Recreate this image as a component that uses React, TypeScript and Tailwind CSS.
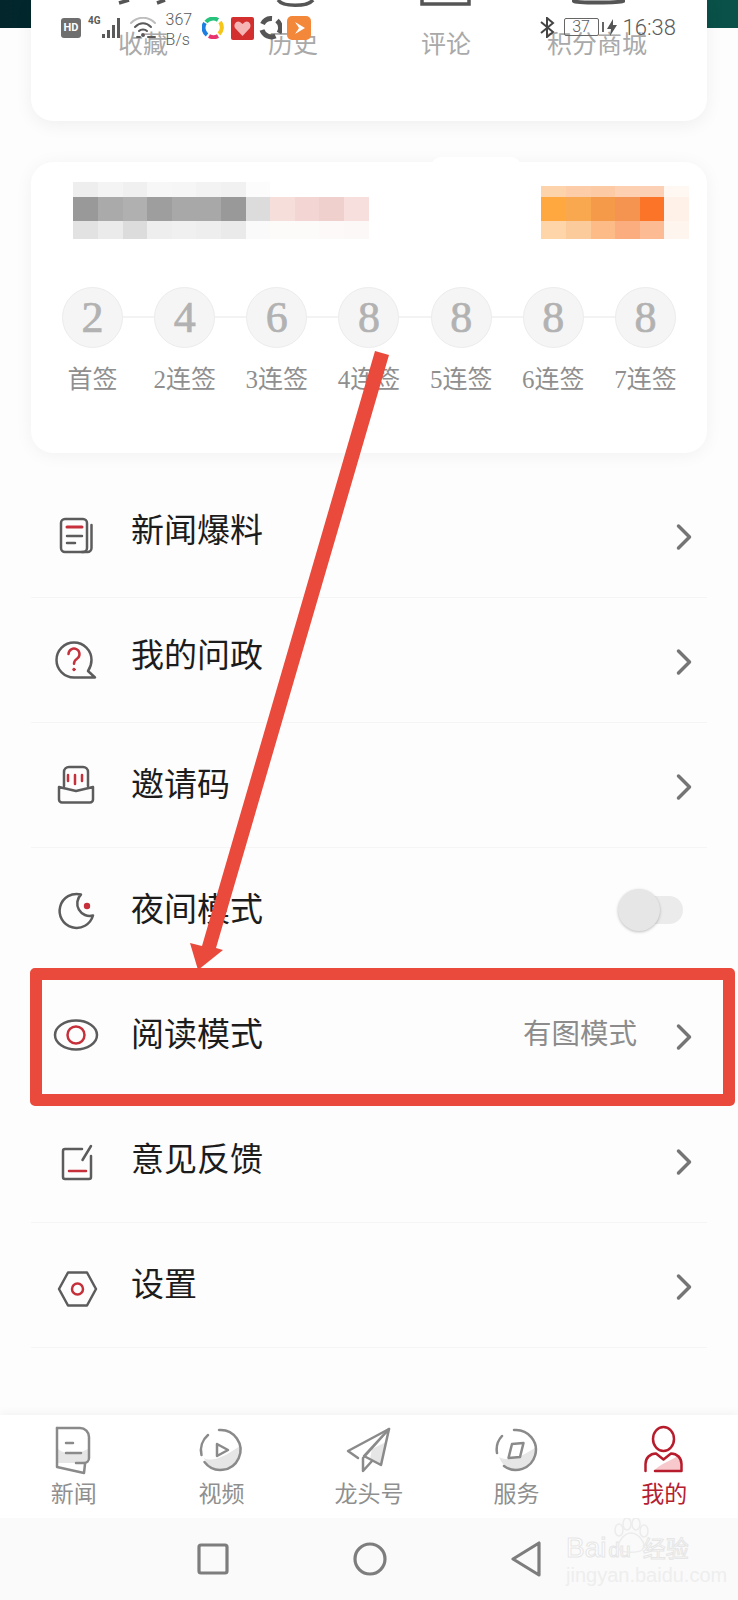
import React from 'react';
import { ChevronRight } from 'lucide-react';

const GRAY = '#5c5c5c';
const RED = '#c5303a';

const topLinks = ['收藏', '历史', '评论', '积分商城'];
const steps = [
  { n: '2', label: '首签' },
  { n: '4', label: '2连签' },
  { n: '6', label: '3连签' },
  { n: '8', label: '4连签' },
  { n: '8', label: '5连签' },
  { n: '8', label: '6连签' },
  { n: '8', label: '7连签' },
];

const leftMosaic = [
  { h: 'h-[15px]', cells: ['#eeeeee', '#f4f4f4', '#f0f0f0', '#f7f7f7', '#f6f6f6', '#f3f3f3', '#f1f1f1', '#fcfcfc', '#ffffff', '#ffffff', '#ffffff', '#ffffff'] },
  { h: 'h-[24px]', cells: ['#999999', '#aaaaaa', '#b0b0b0', '#9e9e9e', '#a8a8a8', '#a8a8a8', '#999999', '#dcdcdc', '#f6dedb', '#f3d6d3', '#efd0cc', '#f6dfdc'] },
  { h: 'h-[18px]', cells: ['#e2e2e2', '#ebebeb', '#dcdcdc', '#eeeeee', '#f0f0f0', '#eeeeee', '#eaeaea', '#fafafa', '#fdfafa', '#fdfafa', '#fdf9f9', '#fdf8f8'] },
];
const rightMosaic = [
  { h: 'h-[11px]', cells: ['#fdd3ac', '#fccda8', '#fccba6', '#fcd0b0', '#fcd0b4', '#fff7f2'] },
  { h: 'h-[24px]', cells: ['#ffa840', '#f9a850', '#f59a48', '#f59350', '#fc7428', '#fff0e8'] },
  { h: 'h-[18px]', cells: ['#fdd5a8', '#fccb9c', '#fdbb88', '#fbad80', '#fdbb94', '#fff5ef'] },
];

const NewsIcon = () => (
  <svg width="50" height="50" viewBox="0 0 50 50" fill="none" strokeWidth="2.5" strokeLinecap="round" strokeLinejoin="round">
    <rect x="10" y="9" width="26" height="33" rx="4" stroke={GRAY} />
    <path d="M40.5 15V38a4 4 0 0 1-4 4H31" stroke={GRAY} />
    <path d="M16 17H31" stroke={RED} strokeWidth="3" />
    <path d="M16 26H31M16 33H24" stroke={GRAY} />
  </svg>
);
const QuestionIcon = () => (
  <svg width="50" height="50" viewBox="0 0 50 50" fill="none" strokeWidth="2.5" strokeLinecap="round" strokeLinejoin="round">
    <path d="M44 42.500H23A17.500 17.500 0 1 1 40.500 25C40.500 29 39 33 37 36Z" stroke={GRAY} />
    <path d="M17.500 19a5.500 5.500 0 1 1 8.500 4.700c-2 1.300-3 2.500-3 5" stroke={RED} />
    <circle cx="23" cy="34.500" r="1.300" fill={RED} stroke={RED} strokeWidth="1" />
  </svg>
);
const InviteIcon = () => (
  <svg width="50" height="50" viewBox="0 0 50 50" fill="none" strokeWidth="2.5" strokeLinecap="round" strokeLinejoin="round">
    <path d="M13 26V12a5 5 0 0 1 5-5H32a5 5 0 0 1 5 5V26" stroke={GRAY} />
    <path d="M8 27L25 31L42 27V39.500a3 3 0 0 1-3 3H11a3 3 0 0 1-3-3Z" stroke={GRAY} />
    <path d="M17 15V21M24 15V24M31 15V21" stroke={RED} />
  </svg>
);
const MoonIcon = () => (
  <svg width="50" height="50" viewBox="0 0 50 50" fill="none" strokeWidth="2.5" strokeLinecap="round" strokeLinejoin="round">
    <path d="M30 9.500A17 17 0 1 0 42 30.500A12.500 12.500 0 0 1 30 9.500Z" stroke={GRAY} />
    <circle cx="36" cy="21" r="3.200" fill={RED} />
  </svg>
);
const EyeIcon = () => (
  <svg width="50" height="50" viewBox="0 0 50 50" fill="none" strokeWidth="2.500">
    <ellipse cx="25" cy="25" rx="21" ry="14.500" stroke={GRAY} />
    <circle cx="25" cy="25" r="8.500" stroke={RED} />
  </svg>
);
const FeedbackIcon = () => (
  <svg width="50" height="50" viewBox="0 0 50 50" fill="none" strokeWidth="2.500" strokeLinecap="round" strokeLinejoin="round">
    <path d="M31 14H14a2 2 0 0 0-2 2V42a2 2 0 0 0 2 2H38a2 2 0 0 0 2-2V21" stroke={GRAY} />
    <path d="M40 11L31.500 25" stroke={GRAY} />
    <path d="M18 36H35" stroke={RED} />
  </svg>
);
const SettingsIcon = () => (
  <svg width="50" height="50" viewBox="0 0 50 50" fill="none" strokeWidth="2.500" strokeLinejoin="round">
    <path d="M8 29L17 12.500H36L45 29L36 45.500H17Z" stroke={GRAY} />
    <circle cx="26.500" cy="29" r="5.500" stroke={RED} />
  </svg>
);

const menu = [
  { title: '新闻爆料', icon: <NewsIcon />, up: true },
  { title: '我的问政', icon: <QuestionIcon />, up: true },
  { title: '邀请码', icon: <InviteIcon /> },
  { title: '夜间模式', icon: <MoonIcon />, toggle: true },
  { title: '阅读模式', icon: <EyeIcon />, value: '有图模式' },
  { title: '意见反馈', icon: <FeedbackIcon /> },
  { title: '设置', icon: <SettingsIcon /> },
];

const TabNews = () => (
  <svg width="60" height="50" viewBox="0 0 60 50" fill="none" stroke="#8a8a8a" strokeWidth="2.500" strokeLinejoin="round" strokeLinecap="round">
    <path d="M14 24C24 32 36 28 44 24V33a5 5 0 0 1-5 5H14Z" fill="#e6e6e6" stroke="none" />
    <path d="M13 3H36a9 9 0 0 1 9 9V33a5 5 0 0 1-5 5H32" />
    <path d="M13 3V42L40 48L41 39" />
    <path d="M22 18H29M22 28H37" />
  </svg>
);
const TabVideo = () => (
  <svg width="60" height="50" viewBox="0 0 60 50" fill="none" stroke="#8a8a8a" strokeWidth="2.500" strokeLinejoin="round" strokeLinecap="round">
    <path d="M13 33C22 38 36 30 49 21C50 34 41 45 29.500 45C22 45 16 40 13 33Z" fill="#e6e6e6" stroke="none" />
    <path d="M28 5A20 20 0 1 1 13.500 37M10.500 30A20 20 0 0 1 17 10" />
    <path d="M26 19L37 25L26 31Z" />
  </svg>
);
const TabPlane = () => (
  <svg width="60" height="50" viewBox="0 0 60 50" fill="none" stroke="#8a8a8a" strokeWidth="2.500" strokeLinejoin="round" strokeLinecap="round">
    <path d="M33 24L47 17L43 40L31 34Z" fill="#e6e6e6" stroke="none" />
    <path d="M50 4L9 26L19 33" />
    <path d="M50 4L42 40L25 31L50 4L24 33V46L33 36" />
  </svg>
);
const TabCompass = () => (
  <svg width="60" height="50" viewBox="0 0 60 50" fill="none" stroke="#8a8a8a" strokeWidth="2.500" strokeLinejoin="round" strokeLinecap="round">
    <path d="M12 32C22 38 38 30 49 22C50 35 41 45 29.500 45C21 45 15 40 12 32Z" fill="#e6e6e6" stroke="none" />
    <path d="M27 5A20 20 0 1 1 17 41M10 28A20 20 0 0 1 15 11" />
    <path d="M25 19L36.500 18L33 32L21.500 33Z" />
  </svg>
);
const TabMe = () => (
  <svg width="60" height="50" viewBox="0 0 60 50" fill="none" stroke="#b71c2c" strokeWidth="2.500" strokeLinejoin="round" strokeLinecap="round">
    <path d="M20 46C24 40 40 34 46 30C47 35 47 41 47 46Z" fill="#f7c9cd" stroke="none" />
    <ellipse cx="29.500" cy="14" rx="10.500" ry="12" />
    <path d="M11.500 46V39C11.500 33 16 28.500 22 28.500L29.500 34.500L37 28.500C43 28.500 47.500 33 47.500 39V46H21" />
  </svg>
);

const tabs = [
  { label: '新闻', icon: <TabNews /> },
  { label: '视频', icon: <TabVideo /> },
  { label: '龙头号', icon: <TabPlane /> },
  { label: '服务', icon: <TabCompass /> },
  { label: '我的', icon: <TabMe />, active: true },
];

const StatusBar = () => (
  <div className="absolute top-0 left-0 w-full h-[50px] flex items-start pl-[61px] pr-[62px] text-[#5a5a5a] font-['Roboto','Noto_Sans_CJK_SC',sans-serif]">
    <div className="mt-[18px] w-[20px] h-[20px] rounded-[3px] bg-[#6e6e6e] text-white text-[11px] font-bold leading-[20px] text-center">HD</div>
    <span className="ml-[7px] mt-[14px] text-[10px] font-bold leading-[14px]">4G</span>
    <svg className="mt-[17px]" width="22" height="22" viewBox="0 0 22 22" fill="#5a5a5a">
      <rect x="1" y="17" width="3" height="4" />
      <rect x="6" y="13" width="3" height="8" />
      <rect x="11" y="8" width="3" height="13" />
      <rect x="16" y="1" width="3" height="20" />
    </svg>
    <svg className="mt-[17px] ml-[7px]" width="26" height="22" viewBox="0 0 26 22" fill="none" stroke="#5a5a5a" strokeWidth="2" strokeLinecap="round">
      <path d="M1 6C8 -1 18 -1 25 6" stroke="#bdbdbd" />
      <path d="M5 10C10 5 16 5 21 10M9 14C11 12 15 12 17 14" />
      <circle cx="13" cy="18" r="1" fill="#5a5a5a" />
      <path d="M18 20H25M7 20H10" />
    </svg>
    <div className="ml-[10px] mt-[11px] text-[16px] leading-[18px] font-light w-[36px]">
      <div>367</div>
      <div className="mt-[2px]">B/s</div>
    </div>
    <svg className="mt-[17px]" width="22" height="22" viewBox="0 0 22 22" fill="none" strokeWidth="4">
      <path d="M4 5A9 9 0 0 1 16 3" stroke="#27c27c" />
      <path d="M18 5A9 9 0 0 1 17 17" stroke="#f5c518" />
      <path d="M16 19A9 9 0 0 1 7 19" stroke="#e8336d" />
      <path d="M5 18A9 9 0 0 1 3 6" stroke="#1f7fe0" />
    </svg>
    <svg className="ml-[7px] mt-[17px]" width="23" height="23" viewBox="0 0 23 23">
      <rect width="23" height="23" rx="2" fill="#d32f2f" />
      <path d="M11.500 19L4 11C2 7 6 3 9 5L11.500 7L14 5C17 3 21 7 19 11Z" fill="#f5b5b5" />
    </svg>
    <svg className="ml-[5px] mt-[16px]" width="23" height="24" viewBox="0 0 23 24" fill="none" stroke="#555555" strokeWidth="5">
      <path d="M3.500 8A10 10 0 0 1 13 2.500M18 4.500A10 10 0 0 1 20 17M16.500 20A10 10 0 0 1 3 14" />
    </svg>
    <svg className="ml-[5px] mt-[16px]" width="24" height="24" viewBox="0 0 24 24">
      <rect width="24" height="24" rx="5" fill="#f3873a" />
      <path d="M8 6L18 12L8 18L12 12Z" fill="#ffffff" />
    </svg>
    <svg className="ml-auto mt-[17px]" width="15" height="21" viewBox="0 0 15 21" fill="none" stroke="#444444" strokeWidth="2">
      <path d="M1 5L13 15L7 20V1L13 6L1 16" />
    </svg>
    <div className="ml-[9px] mt-[18px] w-[35px] h-[18px] border border-[#666666] rounded-[2px] text-[16px] leading-[16px] text-center font-light">37</div>
    <div className="ml-[3px] mt-[22px] w-[2px] h-[10px] bg-[#666666]" />
    <svg className="ml-[3px] mt-[19px]" width="10" height="17" viewBox="0 0 10 17" fill="#555555">
      <path d="M6 0L0 10H4L3 17L10 6H6Z" />
    </svg>
    <span className="ml-[6px] mt-[15px] text-[22px] leading-[26px] font-light">16:38</span>
  </div>
);

const App = () => {
  return (
    <div className="relative w-[738px] h-[1600px] overflow-hidden flex flex-col bg-[#fdfdfd] font-['Liberation_Serif','Noto_Sans_CJK_SC',serif]">
      {/* teal header behind the first card */}
      <div className="absolute top-0 left-0 w-full h-[28px] bg-gradient-to-r from-[#02262b] via-[#033a3c] to-[#0a5249]" />

      {/* Shortcuts card */}
      <section className="relative mx-[31px] h-[121px] shrink-0 rounded-b-[22px] bg-white shadow-[0_4px_18px_rgba(0,0,0,0.06)]">
        <svg className="absolute top-0 left-0" width="676" height="8" viewBox="0 0 676 8" fill="none" stroke="#555555" strokeWidth="3.500">
          <path d="M88 3L98 0M134 0L126 3" />
          <path d="M247 0C252 7 276 7 282 0" />
          <path d="M391 0V4H438V0" />
          <path d="M543 0V1C545 3 588 3 592 1V0" strokeWidth="4" />
        </svg>
        <div className="flex pt-[30px] text-[25px] leading-[30px] text-[#a9a9a9]">
          {topLinks.map((t, i) => (
            <span key={t} className={['ml-[87px]', 'ml-[100px]', 'ml-[103px]', 'ml-[76px]'][i]}>{t}</span>
          ))}
        </div>
      </section>

      {/* Sign-in card */}
      <section className="relative mx-[31px] mt-[41px] h-[291px] shrink-0 rounded-[22px] bg-white shadow-[0_2px_18px_rgba(0,0,0,0.05)] pt-[20px]">
        <div className="absolute -top-[5px] left-[400px] w-[90px] h-[20px] rounded-full bg-white" />
        <div className="relative flex justify-between pl-[42.400px] pr-[18px] h-[57px]">
          <div className="flex flex-col">
            {leftMosaic.map((row, i) => (
              <div key={i} className={`flex ${row.h}`}>
                {row.cells.map((c, j) => (
                  <div key={j} className="w-[24.600px]" style={{ background: c }} />
                ))}
              </div>
            ))}
          </div>
          <div className="flex flex-col pt-[4px]">
            {rightMosaic.map((row, i) => (
              <div key={i} className={`flex ${row.h}`}>
                {row.cells.map((c, j) => (
                  <div key={j} className="w-[24.600px]" style={{ background: c }} />
                ))}
              </div>
            ))}
          </div>
        </div>
        <div className="relative grid grid-cols-7 px-[15.500px] mt-[48px]">
          <div className="absolute left-[60px] right-[60px] top-[29px] h-[2px] bg-[#f3f3f3]" />
          {steps.map((s) => (
            <div key={s.label} className="relative flex flex-col items-center">
              <div className="w-[61px] h-[61px] rounded-full bg-[#f5f5f5] border border-[#ececec] flex items-center justify-center text-[44px] leading-none text-[#b2b2b2] [-webkit-text-stroke:0.7px_#b2b2b2]">
                {s.n}
              </div>
              <span className="mt-[16px] text-[25px] leading-[32px] text-[#8f8f8f]">{s.label}</span>
            </div>
          ))}
        </div>
      </section>

      {/* Menu */}
      <nav className="mx-[31px] mt-[20px] shrink-0">
        {menu.map((m) => (
          <div key={m.title} className="h-[125px] flex items-center pl-[20px] pr-[1px] border-b border-[#f5f5f5]">
            <div className="w-[50px] h-[50px] shrink-0">{m.icon}</div>
            <span className={`ml-[30px] text-[33px] leading-[40px] text-[#1c1c1c] ${m.up ? 'mb-[9px]' : ''}`}>{m.title}</span>
            {m.value && <span className="ml-auto mr-[25px] text-[28.500px] leading-[36px] text-[#8c8c8c]">{m.value}</span>}
            {m.toggle ? (
              <div className="relative ml-auto mr-[23px] w-[52px] h-[28px] rounded-full bg-[#ebebeb]">
                <div className="absolute -left-[13px] -top-[7px] w-[42px] h-[42px] rounded-full bg-[#e6e6e6] shadow-[0_1px_3px_rgba(0,0,0,0.25)]" />
              </div>
            ) : (
              <ChevronRight className={`mt-[3px] ${m.value ? '' : 'ml-auto'}`} size={44} color="#757575" strokeWidth={1.9} />
            )}
          </div>
        ))}
      </nav>

      <div className="flex-1" />

      {/* Bottom tabs */}
      <footer className="h-[103px] shrink-0 grid grid-cols-5 bg-white pt-[10px] shadow-[0_-3px_8px_rgba(0,0,0,0.04)]">
        {tabs.map((t) => (
          <div key={t.label} className="flex flex-col items-center">
            {t.icon}
            <span className={`mt-[5px] text-[23px] leading-[30px] ${t.active ? 'text-[#b5202e]' : 'text-[#8f8f8f]'}`}>{t.label}</span>
          </div>
        ))}
      </footer>

      {/* System nav */}
      <div className="h-[82px] shrink-0 bg-[#fafafa] flex items-center justify-center gap-[124px] pl-[0px] pr-[0px] pb-[1px]">
        <svg width="32" height="32" viewBox="0 0 32 32" fill="none" stroke="#7d7d7d" strokeWidth="3.200" strokeLinejoin="round">
          <rect x="2" y="2" width="28" height="28" rx="2" />
        </svg>
        <svg width="34" height="34" viewBox="0 0 34 34" fill="none" stroke="#7d7d7d" strokeWidth="3.200">
          <circle cx="17" cy="17" r="15" />
        </svg>
        <svg width="30" height="36" viewBox="0 0 30 36" fill="none" stroke="#7d7d7d" strokeWidth="3.200" strokeLinejoin="round">
          <path d="M28 2V34L2 18Z" />
        </svg>
      </div>

      <StatusBar />

      {/* Baidu watermark */}
      <div className="absolute left-[566px] top-[1518px] w-[134px] text-[#f1f1f1] font-['Liberation_Sans','Noto_Sans_CJK_SC',sans-serif]">
        <svg className="absolute left-[44px] top-0" width="42" height="36" viewBox="0 0 42 36" fill="none" stroke="#ececec" strokeWidth="1.500">
          <ellipse cx="9" cy="12" rx="4" ry="6" />
          <ellipse cx="17" cy="6" rx="4" ry="6" />
          <ellipse cx="26" cy="6" rx="4" ry="6" />
          <ellipse cx="34" cy="13" rx="4" ry="6" />
          <path d="M21 15C28 15 38 26 32 32C28 35 14 35 10 32C5 26 14 15 21 15Z" />
        </svg>
        <div className="flex items-end h-[45px] text-[28px] leading-[30px] text-white [-webkit-text-stroke:1px_#e6e6e6]">
          <span>Bai</span>
          <span className="ml-[2px] text-[20px] leading-[26px]">du</span>
          <span className="ml-[12px] text-[23px] leading-[28px]">经验</span>
        </div>
        <div className="mt-[1px] text-[20px] leading-[22px] whitespace-nowrap text-[#eeeeee]">jingyan.baidu.com</div>
      </div>

      {/* Red annotation */}
      <svg className="absolute left-[180px] top-[345px]" width="220" height="630" viewBox="180 345 220 630" fill="#e94a3b">
        <path d="M375 351L389 355L216 948L223 950L198 970L190 943L202 946Z" />
      </svg>
      <div className="absolute left-[30px] top-[968px] w-[705px] h-[138px] border-[12px] border-[#e94a3b] rounded-[5px]" />
    </div>
  );
};

export default App;
